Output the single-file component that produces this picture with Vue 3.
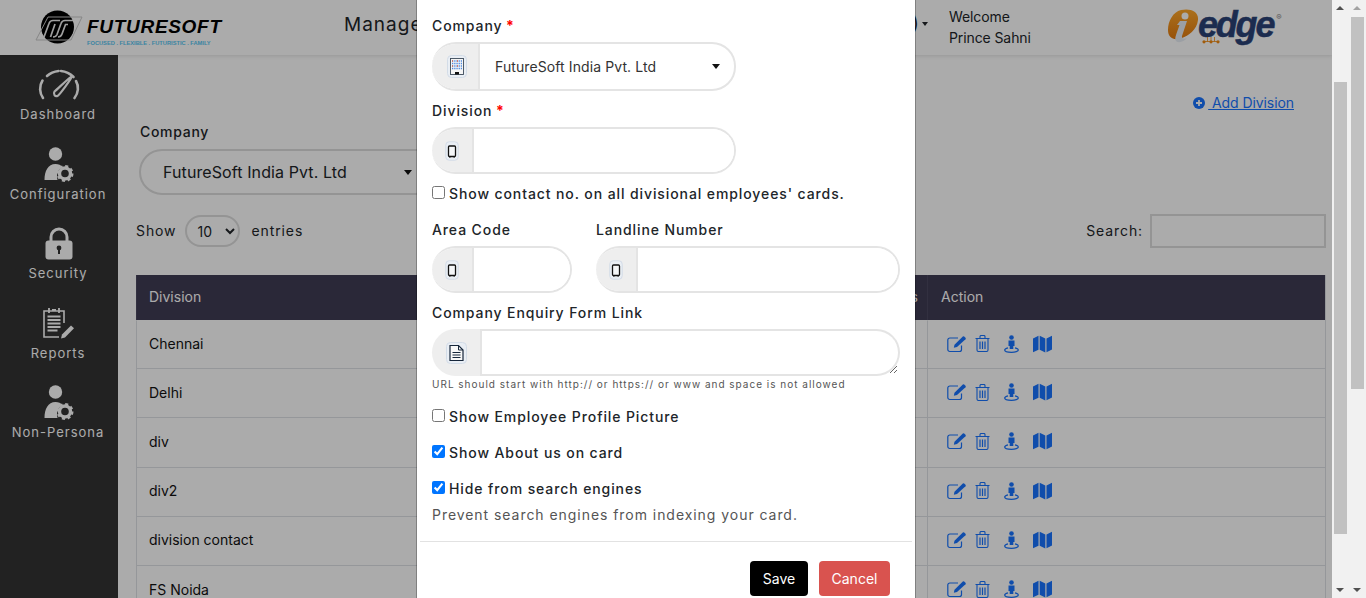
<script setup>
const sideItems = [
  { key: 'gauge', label: 'Dashboard' },
  { key: 'person', label: 'Configuration' },
  { key: 'lock', label: 'Security' },
  { key: 'report', label: 'Reports' },
  { key: 'person', label: 'Non-Persona' }
]
const rows = ['Chennai', 'Delhi', 'div', 'div2', 'division contact', 'FS Noida']
const actions = ['i-edit', 'i-trash', 'i-pin', 'i-map']
</script>

<template>
  <div class="app">
    <svg class="defs" aria-hidden="true">
      <symbol id="i-edit" viewBox="0 0 20 18">
        <path d="M14.500 10.500v4a2 2 0 0 1-2 2H2.800a2 2 0 0 1-2-2V5a2 2 0 0 1 2-2H11" fill="none" stroke="currentColor" stroke-width="1.200"/>
        <path d="M6.800 12.800l.7-3L15.800 1.500a1 1 0 0 1 1.400 0l1.300 1.300a1 1 0 0 1 0 1.400L10 12z" fill="currentColor"/>
      </symbol>
      <symbol id="i-trash" viewBox="0 0 15 17">
        <path d="M.5 3.500h14M5 3.500V1.500a1 1 0 0 1 1-1h3a1 1 0 0 1 1 1v2M2 3.500V15a1.500 1.500 0 0 0 1.500 1.500h8A1.500 1.500 0 0 0 13 15V3.500" fill="none" stroke="currentColor" stroke-width="1.100"/>
        <path d="M5 6.500v7.500M7.500 6.500v7.500M10 6.500v7.500" stroke="currentColor" stroke-width="1.200"/>
      </symbol>
      <symbol id="i-pin" viewBox="0 0 15 18">
        <circle cx="7.500" cy="2.500" r="2.300" fill="currentColor"/>
        <path d="M4.500 5.500h6v5.500H9.300v3H5.700v-3H4.500z" fill="currentColor"/>
        <path d="M4 12.800C2 13.300.7 14 .7 15c0 1.300 3 2.300 6.800 2.300s6.800-1 6.800-2.300c0-1-1.300-1.700-3.300-2.200" fill="none" stroke="currentColor" stroke-width="1.300"/>
      </symbol>
      <symbol id="i-map" viewBox="0 0 19 18">
        <path d="M0 3.500 5.500.7v14L0 17.300zM6.700.7l5.600 2.800v14l-5.600-2.800zM13.500 3.500 19 .7v13.800l-5.500 2.800z" fill="currentColor"/>
      </symbol>
      <symbol id="i-phone" viewBox="0 0 14 20">
        <rect x=".75" y=".75" width="12.500" height="18.500" rx="3.500" fill="#e9eef4" stroke="#d3dce7" stroke-width="1"/>
        <rect x="3.500" y="5" width="7" height="10.500" rx="1" fill="#f4f6f8" stroke="#111" stroke-width="1.300"/>
        <path d="M4 15.800h1.600M8.400 15.800h1.600" stroke="#111" stroke-width="1.300"/>
      </symbol>
    </svg>

    <div class="page">
      <header class="topbar">
        <div class="fs-logo">
          <svg class="fs-mark" viewBox="0 0 48 36" aria-hidden="true">
            <circle cx="22.500" cy="18" r="16.500" fill="#000"/>
            <path d="M13 8H47L36 31H1z" fill="none" stroke="#c9c9c9" stroke-width="1"/>
            <g fill="none" stroke="#eee" stroke-width="1.700">
              <path d="M25 11.500H18Q15 11.500 14 14.500L9 28"/>
              <path d="M20 15L15.500 28"/>
              <path d="M38 11.500H30Q27 11.500 26 14.500L22 25.500Q21 28 18 28"/>
              <path d="M33 15.500H30.500L27 25Q26 28 23 28"/>
            </g>
          </svg>
          <div class="fs-text">
            <span class="fs-name">FUTURESOFT</span>
            <span class="fs-tag">FOCUSED . FLEXIBLE . FUTURISTIC . FAMILY</span>
          </div>
        </div>
        <nav class="top-nav">Manage</nav>
        <div class="profile">
          <span class="role">(Admin)</span>
          <span class="top-caret"></span>
        </div>
        <div class="welcome">Welcome<br>Prince Sahni</div>
        <div class="ie-logo">
          <svg class="ie-mark" viewBox="0 0 32 36" aria-hidden="true">
            <defs>
              <linearGradient id="ieo" x1="0" y1="0" x2="0" y2="1">
                <stop offset="0" stop-color="#ffa82a"/>
                <stop offset="1" stop-color="#e27a10"/>
              </linearGradient>
            </defs>
            <path d="M14 1C23 -1 32 2 31 11 30 21 21 27 15 29 7 32 1 29 1 21 1 12 6 3 14 1z" fill="url(#ieo)"/>
            <circle cx="18" cy="7" r="3.500" fill="#fff"/>
            <path d="M13 12h7L15 27c-.6 2.400 1.500 3.500 5 2-3 4-10 6-11.500 2-.7-2 .3-4 1-6.500L12.500 16H10z" fill="#e8eef5"/>
          </svg>
          <span class="ie-name">edge</span>
          <span class="ie-reg">®</span>
          <svg class="ie-dots" viewBox="0 0 18 7" aria-hidden="true">
            <path d="M2 4.500h14M9 0v4.500M5.500 0v4.500M12.500 0v4.500" stroke="#f08a12" stroke-width=".8" fill="none"/>
            <circle cx="2" cy="4.800" r="1.600" fill="#f08a12"/><circle cx="9" cy="4.800" r="1.600" fill="#f08a12"/><circle cx="16" cy="4.800" r="1.600" fill="#f08a12"/>
          </svg>
        </div>
      </header>

      <div class="body">
        <aside class="sidebar">
          <div v-for="item in sideItems" :key="item.label" class="side-item">
            <div class="side-icon">
              <svg v-if="item.key === 'gauge'" width="44" height="36" viewBox="0 0 44 36" aria-hidden="true">
                <g fill="none" stroke="#fff" stroke-width="2.600" stroke-linecap="round">
                  <path d="M6 31C2.500 26 2 19 5.500 13.500M10 9C13 6.300 17 4.500 21.500 4M24 4C29 4.500 33 6.500 36.500 10M39 14C42 19 41.500 26 37.500 31"/>
                </g>
                <path d="M17.500 24.500C16 27 18 30 20.500 29 22 28.500 35 11 35 9 34 9 20 22.500 17.500 24.500z" fill="none" stroke="#fff" stroke-width="2.200"/>
              </svg>
              <svg v-else-if="item.key === 'person'" width="32" height="36" viewBox="0 0 32 36" aria-hidden="true">
                <circle cx="12.500" cy="7" r="6.700" fill="#fff"/>
                <path d="M1.500 33c0-9 3.500-16 11-16 3 0 5.500 1 7 3-4 2-6.500 6.500-5 13z" fill="#fff"/>
                <circle cx="22" cy="26.500" r="5.500" fill="none" stroke="#fff" stroke-width="3.400"/>
                <circle cx="22" cy="26.500" r="7.300" fill="none" stroke="#fff" stroke-width="2.400" stroke-dasharray="3 2.730"/>
              </svg>
              <svg v-else-if="item.key === 'lock'" width="30" height="34" viewBox="0 0 30 34" aria-hidden="true">
                <path d="M7 16V10a8 8 0 0 1 16 0v6" fill="none" stroke="#fff" stroke-width="3"/>
                <rect x="1.500" y="13.500" width="27" height="19" rx="3" fill="#fff"/>
                <circle cx="15" cy="21" r="2.400" fill="#333"/>
                <rect x="14" y="21" width="2" height="6" fill="#333"/>
              </svg>
              <svg v-else width="34" height="34" viewBox="0 0 34 34" aria-hidden="true">
                <path d="M22 16V4H2v26h15" fill="none" stroke="#fff" stroke-width="1.600"/>
                <path d="M7 1v5M17 1v5M10 3h4" stroke="#fff" stroke-width="1.800" fill="none"/>
                <path d="M5.500 9.500h13M5.500 13h13M5.500 16.500h13M5.500 20h13M5.500 23.500h10" stroke="#fff" stroke-width="1.800" fill="none"/>
                <path d="M19 31.500l1-4L29 18.500l3 2.800L23 30.500z" fill="#fff"/>
              </svg>
            </div>
            <div class="side-label">{{ item.label }}</div>
          </div>
        </aside>

        <main class="content">
          <div class="add-row">
            <a class="add-link">
              <svg width="12" height="12" viewBox="0 0 12 12" aria-hidden="true">
                <circle cx="6" cy="6" r="6" fill="currentColor"/>
                <path d="M6 3v6M3 6h6" stroke="#fff" stroke-width="1.800"/>
              </svg>
              <span>&nbsp;Add Division</span>
            </a>
          </div>
          <label class="bg-label">Company</label>
          <div class="bg-select">
            <span>FutureSoft India Pvt. Ltd</span>
            <i class="caret"></i>
          </div>
          <div class="controls">
            <div class="show">
              <span>Show</span>
              <select class="len"><option>10</option></select>
              <span>entries</span>
            </div>
            <div class="search">
              <span>Search:</span>
              <input class="search-input" type="text">
            </div>
          </div>
          <table class="grid">
            <colgroup>
              <col style="width: 714px">
              <col style="width: 77px">
              <col>
            </colgroup>
            <thead>
              <tr>
                <th>Division</th>
                <th>Address</th>
                <th class="last">Action</th>
              </tr>
            </thead>
            <tbody>
              <tr v-for="row in rows" :key="row">
                <td>{{ row }}</td>
                <td></td>
                <td class="acts">
                  <div class="act-list">
                    <svg v-for="a in actions" :key="a" :class="['act', a]" aria-hidden="true"><use :href="'#' + a"/></svg>
                  </div>
                </td>
              </tr>
            </tbody>
          </table>
        </main>
      </div>
    </div>

    <div class="overlay"></div>

    <section class="modal">
      <div class="modal-body">
        <div class="lbl">Company <b>*</b></div>
        <div class="field f-company">
          <span class="addon a48">
            <svg width="20" height="23" viewBox="0 0 20 23" aria-hidden="true">
              <rect x=".5" y=".5" width="19" height="22" rx="4" fill="#e9eef4" stroke="#d3dce7"/>
              <rect x="3.500" y="3.500" width="13" height="16" fill="#f5f5f5" stroke="#3c4a5a" stroke-width=".9"/>
              <path d="M5 6h10M5 8.500h10M5 11h10M5 13.500h10" stroke="#4f8ae0" stroke-width="1.400" stroke-dasharray="1.300 .9"/>
              <path d="M5 6h10M5 11h10" stroke="#e0654a" stroke-width="1.400" stroke-dasharray="1 4"/>
              <rect x="8" y="17" width="4" height="2.500" fill="#111"/>
            </svg>
          </span>
          <div class="sel-val">
            <span>FutureSoft India Pvt. Ltd</span>
            <i class="caret"></i>
          </div>
        </div>

        <div class="lbl">Division <b>*</b></div>
        <div class="field f-47">
          <span class="addon a42"><svg class="phone"><use href="#i-phone"/></svg></span>
          <input class="inp" type="text">
        </div>

        <label class="chk first"><input type="checkbox"><span>Show contact no. on all divisional employees' cards.</span></label>

        <div class="two">
          <div class="col-a">
            <div class="lbl">Area Code</div>
            <div class="field f-47">
              <span class="addon a42"><svg class="phone"><use href="#i-phone"/></svg></span>
              <input class="inp" type="text">
            </div>
          </div>
          <div class="col-b">
            <div class="lbl">Landline Number</div>
            <div class="field f-47">
              <span class="addon a42"><svg class="phone"><use href="#i-phone"/></svg></span>
              <input class="inp" type="text">
            </div>
          </div>
        </div>

        <div class="lbl">Company Enquiry Form Link</div>
        <div class="field f-area">
          <span class="addon a49">
            <svg width="21" height="22" viewBox="0 0 21 22" aria-hidden="true">
              <rect x=".5" y=".5" width="20" height="21" rx="4" fill="#e9eef4" stroke="#d3dce7"/>
              <path d="M4 3.500h8.500L17 8v10.500H4z" fill="#f8f8f8" stroke="#16263a" stroke-width="1.200"/>
              <path d="M12.500 3.500V8H17" fill="none" stroke="#16263a" stroke-width="1"/>
              <path d="M6.500 10.500h8M6.500 13h8M6.500 15.500h8" stroke="#16263a" stroke-width="1"/>
            </svg>
          </span>
          <textarea class="inp area"></textarea>
        </div>
        <div class="hint">URL should start with http:// or https:// or www and space is not allowed</div>

        <label class="chk c1"><input type="checkbox"><span>Show Employee Profile Picture</span></label>
        <label class="chk c2"><input type="checkbox" checked><span>Show About us on card</span></label>
        <label class="chk c2"><input type="checkbox" checked><span>Hide from search engines</span></label>
        <div class="prevent">Prevent search engines from indexing your card.</div>
      </div>
      <div class="modal-foot">
        <button class="btn save" type="button">Save</button>
        <button class="btn cancel" type="button">Cancel</button>
      </div>
    </section>

    <div class="bar bar-a">
      <i class="arrow up dark"></i>
      <i class="thumb t-a"></i>
      <i class="arrow down"></i>
    </div>
    <div class="bar bar-b">
      <i class="arrow up light"></i>
      <i class="thumb t-b"></i>
      <i class="arrow down"></i>
    </div>
  </div>
</template>

<style scoped>
.app {
  position: relative;
  display: flex;
  width: 1366px;
  height: 598px;
  overflow: hidden;
  font-family: Inter, "Liberation Sans", sans-serif;
  font-size: 14px;
  color: #212529;
  background: #fff;
}
.defs { position: absolute; width: 0; height: 0; }
.page { width: 1332px; height: 598px; display: flex; flex-direction: column; flex: none; overflow: hidden; }

/* top bar */
.topbar {
  height: 55px;
  flex: none;
  display: flex;
  align-items: center;
  background: #fff;
  box-shadow: 0 1px 4px rgba(0,0,0,.12);
  position: relative;
}
.fs-logo { display: flex; align-items: flex-start; margin-left: 35px; width: 309px; height: 55px; }
.fs-mark { width: 48px; height: 36px; margin-top: 9px; flex: none; }
.fs-text { margin-left: 4px; display: flex; flex-direction: column; }
.fs-name {
  margin-top: 16px;
  font-family: "Liberation Sans", sans-serif;
  font-weight: 700;
  font-style: italic;
  font-size: 19px;
  line-height: 22px;
  letter-spacing: .7px;
  color: #000;
  white-space: nowrap;
}
.fs-tag {
  font-family: "Liberation Sans", sans-serif;
  font-size: 5.700px;
  font-weight: 700;
  line-height: 9px;
  margin-top: 1px;
  color: #58c6f2;
  white-space: nowrap;
}
.top-nav { font-size: 19px; letter-spacing: 1px; line-height: 50px; height: 55px; width: 340px; white-space: nowrap; overflow: hidden; }
.profile { display: flex; align-items: center; width: 246px; justify-content: flex-end; font-size: 19px; letter-spacing: 1px; white-space: nowrap; overflow: hidden; height: 55px; margin-top: -8px; }
.role { margin-right: 2px; }
.top-caret { width: 0; height: 0; border: 3.500px solid transparent; border-top: 4px solid #212529; border-bottom: 0; margin-right: 2px; }
.welcome { margin-left: 19px; font-size: 14px; line-height: 21px; width: 219px; margin-top: -1px; letter-spacing: -.1px; }
.ie-logo { position: relative; display: flex; align-items: flex-start; height: 55px; width: 120px; margin-left: -1px; }
.ie-mark { width: 32px; height: 36px; margin-top: 9px; flex: none; }
.ie-name {
  font-family: "Liberation Sans", sans-serif;
  font-weight: 700;
  font-style: italic;
  font-size: 36px;
  line-height: 50px;
  letter-spacing: -2.200px;
  color: #2a4276;
  margin-left: -1px;
  -webkit-text-stroke: .5px #2a4276;
}
.ie-reg { font-size: 8px; color: #888; margin-top: 13px; margin-left: 3px; line-height: 9px; }
.ie-dots { position: absolute; left: 35px; top: 37px; width: 18px; height: 7px; }

/* body */
.body { flex: 1; display: flex; min-height: 0; }
.sidebar { width: 118px; flex: none; background: #333; padding-top: 11px; }
.side-item { height: 79.500px; text-align: center; color: #fff; }
.side-icon { height: 38px; display: flex; align-items: center; justify-content: center; }
.side-label { font-size: 13px; line-height: 20px; letter-spacing: 1px; white-space: nowrap; font-weight: 400; padding-right: 2px; }

.content { flex: 1; min-width: 0; padding: 38px 6px 0 18px; overflow: hidden; background: #fff; }
.add-row { display: flex; justify-content: flex-end; height: 20px; padding-right: 32px; }
.add-link { display: flex; align-items: center; color: #1874ff; line-height: 20px; letter-spacing: -.08px; }
.add-link span { text-decoration: underline; margin-left: 3px; }
.bg-label { display: block; margin: 9px 0 0 4px; line-height: 20px; font-weight: 500; letter-spacing: .7px; }
.bg-select {
  margin: 7px 0 0 3px;
  width: 300px;
  height: 46px;
  box-sizing: border-box;
  border: 2px solid #ddd;
  border-radius: 23px;
  display: flex;
  align-items: center;
  justify-content: space-between;
  padding: 0 25px 0 22px;
  font-size: 16px;
  letter-spacing: .1px;
}
.caret { width: 0; height: 0; border: 4.500px solid transparent; border-top: 5px solid #111; border-bottom: 0; font-style: normal; display: block; }
.controls { margin-top: 19px; height: 34px; display: flex; justify-content: space-between; align-items: center; letter-spacing: .9px; }
.controls span { margin-bottom: 2px; }
.show { display: flex; align-items: center; }
.len { width: 55px; height: 32px; margin: 0 11px 0 9px; border: 2px solid #ddd; border-radius: 16px; background: #fff; font: 14px Inter, sans-serif; padding-left: 6px; color: #212529; }
.search { display: flex; align-items: center; }
.search-input { width: 176px; height: 34px; box-sizing: border-box; border: 2px solid #ddd; margin-left: 7px; background: #fff; outline: none; }

.grid { margin-top: 27px; width: 1190px; border-collapse: separate; border-spacing: 0; table-layout: fixed; border-right: 1px solid #dee2e6; }
.grid th { height: 45px; padding: 0 12px 2px; box-sizing: border-box; background: #3f3c54; color: #fff; font-weight: 400; text-align: left; border-left: 1px solid #4b4860; }
.grid th.last { padding-left: 13px; }
.grid tbody tr { height: 49.200px; }
.grid tbody tr:first-child { height: 48.200px; }
.grid td { padding: 0 12px 2px; border-top: 1px solid #dee2e6; border-left: 1px solid #dee2e6; color: #111; }
.grid tbody tr:first-child td { border-top-color: transparent; }
.act-list { display: flex; align-items: center; }
.act { color: #1874ff; flex: none; }
.i-edit { width: 20px; height: 18px; margin-left: 7px; }
.i-trash { width: 15px; height: 17px; margin-left: 8px; }
.i-pin { width: 15px; height: 18px; margin-left: 14px; }
.i-map { width: 19px; height: 18px; margin-left: 14px; }

/* overlay + modal */
.overlay { position: absolute; left: 0; top: 0; width: 1332px; height: 598px; background: rgba(0,0,0,.33); z-index: 2; }
.modal {
  position: absolute;
  z-index: 3;
  left: 417px;
  top: 0;
  width: 498px;
  height: 598px;
  background: #fff;
  box-shadow: -1px 0 0 rgba(0,0,0,.25), 1px 0 0 rgba(0,0,0,.25);
  overflow: hidden;
  letter-spacing: .9px;
  color: #212529;
}
.modal-body { padding: 16px 15px 0; }
.lbl { height: 20px; line-height: 20px; margin-bottom: 6px; font-weight: 500; white-space: nowrap; }
.lbl b { color: #f00; font-weight: 700; margin-left: -1px; }
.field {
  display: flex;
  box-sizing: border-box;
  border: 2px solid #e4e4e4;
  border-left: 0;
  border-radius: 24px;
  overflow: hidden;
  margin-bottom: 10px;
  background: #fff;
}
.f-company { width: 304px; height: 49px; }
.f-47 { height: 47px; width: 304px; }
.f-area { height: 47px; width: 468px; margin-bottom: 1px; border: 0; overflow: visible; background: transparent; }
.col-a .f-47 { width: 140px; }
.addon { flex: none; display: flex; align-items: center; justify-content: center; background: #eee; margin: -2px 0; box-sizing: border-box; border-right: 2px solid #e4e4e4; border-radius: 24px 0 0 24px; }
.a48 { width: 48px; padding-left: 3px; }
.a42 { width: 42px; }
.a49 { width: 50px; margin: 0; }
.phone { width: 14px; height: 20px; }
.sel-val { flex: 1; display: flex; align-items: center; justify-content: space-between; padding: 0 14px 0 15px; letter-spacing: .1px; color: #333; }
.inp { flex: 1; min-width: 0; border: 0; outline: 0; background: #fff; padding: 0 8px; }
.area { display: block; height: 47px; box-sizing: border-box; margin: 0; border: 2px solid #e4e4e4; border-left: 0; border-radius: 0 24px 24px 0; resize: both; }
.chk { display: flex; align-items: center; height: 20px; font-weight: 500; white-space: nowrap; }
.chk input { margin: 0 4px 1px 0; width: 13px; height: 13px; flex: none; }
.chk.first { margin: -1px 0 17px; }
.two { display: flex; gap: 24px; }
.col-a { width: 140px; flex: none; }
.col-b { width: 304px; flex: none; }
.hint { height: 14px; line-height: 14px; font-size: 10px; color: #555; letter-spacing: 1px; }
.c1 { margin-top: 15px; }
.c2 { margin-top: 16px; }
.prevent { margin-top: 7px; line-height: 20px; color: #555; letter-spacing: .95px; }
.modal-foot {
  margin: 16px 3px 0;
  border-top: 1px solid #e2e2e2;
  padding: 19px 22px 0 0;
  display: flex;
  justify-content: flex-end;
  gap: 11px;
}
.btn { height: 35px; border: 0; border-radius: 4px; color: #fff; font: 14px Inter, sans-serif; }
.save { width: 58px; background: #000; }
.cancel { width: 71px; background: #d9534f; }

/* scrollbars */
.bar { position: relative; width: 17px; height: 598px; flex: none; background: #f1f1f1; }
.thumb { position: absolute; display: block; width: 13px; background: #c1c1c1; }
.bar-a .thumb { left: 2px; }
.bar-b .thumb { left: 2px; }
.t-a { top: 82px; height: 452px; }
.t-b { top: 17px; height: 372px; }
.arrow { position: absolute; left: 4px; width: 0; height: 0; border: 4px solid transparent; display: block; }
.up { top: 6px; border-top: 0; border-bottom: 4px solid #505050; }
.up.light { border-bottom-color: #a3a3a3; }
.down { bottom: 6px; border-bottom: 0; border-top: 4px solid #505050; }
</style>
